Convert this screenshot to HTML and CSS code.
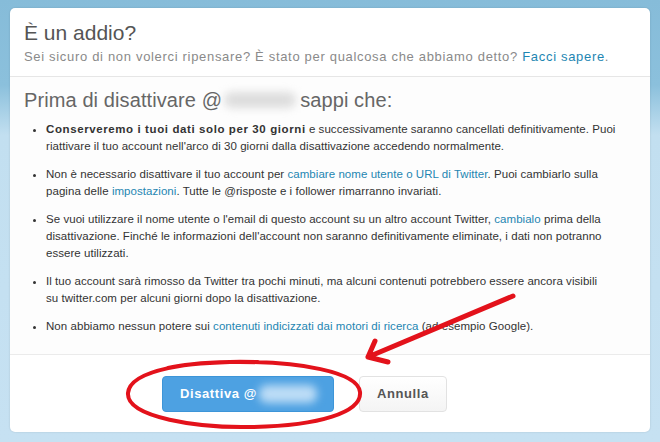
FILE: index.html
```html
<!DOCTYPE html>
<html lang="it">
<head>
  <meta charset="UTF-8">
  <title>Disattiva il tuo account</title>
  <link rel="stylesheet" href="styles.css">
</head>
<body>
  <div class="dialog">
    <div class="dialog-header">
      <h1>È un addio?</h1>
      <p>Sei sicuro di non volerci ripensare? È stato per qualcosa che abbiamo detto? <a href="#">Facci sapere</a>.</p>
    </div>

    <div class="dialog-body">
      <h2>Prima di disattivare @<span class="blur"></span> sappi che:</h2>
      <ul class="avvisi">
        <li><strong>Conserveremo i tuoi dati solo per 30 giorni</strong> e successivamente saranno cancellati definitivamente. Puoi<br>riattivare il tuo account nell'arco di 30 giorni dalla disattivazione accedendo normalmente.</li>
        <li>Non è necessario disattivare il tuo account per <a href="#">cambiare nome utente o URL di Twitter</a>. Puoi cambiarlo sulla<br>pagina delle <a href="#">impostazioni</a>. Tutte le @risposte e i follower rimarranno invariati.</li>
        <li>Se vuoi utilizzare il nome utente o l'email di questo account su un altro account Twitter, <a href="#">cambialo</a> prima della<br>disattivazione. Finché le informazioni dell'account non saranno definitivamente eliminate, i dati non potranno<br>essere utilizzati.</li>
        <li>Il tuo account sarà rimosso da Twitter tra pochi minuti, ma alcuni contenuti potrebbero essere ancora visibili<br>su twitter.com per alcuni giorni dopo la disattivazione.</li>
        <li>Non abbiamo nessun potere sui <a href="#">contenuti indicizzati dai motori di ricerca</a> (ad esempio Google).</li>
      </ul>
    </div>

    <div class="dialog-footer">
      <button class="btn btn-primary">Disattiva @<span class="blur blur-light"></span></button>
      <button class="btn">Annulla</button>
    </div>

    <!-- segni a mano sopra lo screenshot -->
    <svg class="segni" width="660" height="442" viewBox="0 0 660 442">
      <path d="M258 362 C 190 360, 130 370, 128 393 C 126 418, 200 428, 250 427 C 320 426, 362 412, 360 392 C 358 372, 300 361, 230 362 C 200 363, 180 365, 168 368"
            fill="none" stroke="#e3121b" stroke-width="4" stroke-linecap="round"/>
      <path d="M513 296 L 368 357 M 368 357 L 388 362 M 368 357 L 375 341"
            fill="none" stroke="#e3121b" stroke-width="5" stroke-linecap="round" stroke-linejoin="round"/>
    </svg>
  </div>
</body>
</html>
```

FILE: styles.css
```css
body {
  margin: 0;
  height: 442px;
  overflow: hidden;
  font-family: "Liberation Sans", Arial, sans-serif;
  background: linear-gradient(#86bcd9 0, #8bc0dc 85px, #c2dff0 135px, #c6e1f2 100%);
  padding: 8px 10px 0;
  box-sizing: border-box;
}
.dialog {
  position: relative;
  width: 640px;
  height: 424px;
  background: #fff;
  border-radius: 5px;
  box-shadow: 0 0 2px rgba(0, 0, 0, 0.15);
  display: flex;
  flex-direction: column;
}
a {
  color: #1e86b2;
  text-decoration: none;
}
.dialog-header {
  height: 69px;
  padding: 12px 14px 0;
  box-sizing: border-box;
  border-bottom: 1px solid #e6e6e6;
}
.dialog-header h1 {
  margin: 0;
  font-size: 21px;
  font-weight: normal;
  color: #555;
  line-height: 26px;
}
.dialog-header p {
  margin: 3px 0 0;
  font-size: 13px;
  letter-spacing: 0.68px;
  color: #8a8a8a;
}
.dialog-body {
  height: 278px;
  padding: 11px 4px 0 14px;
  box-sizing: border-box;
  background: #fdfdfd;
  border-bottom: 1px solid #ebebeb;
}
.dialog-body h2 {
  margin: 0;
  font-size: 20px;
  letter-spacing: 0.1px;
  font-weight: normal;
  color: #666;
  line-height: 24px;
  display: flex;
  align-items: center;
}
.blur {
  display: inline-block;
  width: 72px;
  height: 16px;
  margin: 0 4px 0 2px;
  background: #ddd;
  border-radius: 8px;
  filter: blur(4px);
}
.avvisi {
  margin: 9px 0 0;
  padding: 0 0 0 22px;
  font-size: 11.5px;
  letter-spacing: 0.05px;
  line-height: 17px;
  color: #333;
}
.avvisi li {
  margin-bottom: 11px;
}
.avvisi strong {
  letter-spacing: 0.6px;
}
.dialog-footer {
  flex: 1;
  display: flex;
  align-items: center;
  gap: 25px;
  padding: 0 0 0 152px;
}
.btn {
  height: 36px;
  padding: 0 17px;
  border: 1px solid #e2e2e2;
  border-radius: 4px;
  background: linear-gradient(#fff, #f4f4f4);
  font-family: inherit;
  font-size: 13px;
  font-weight: bold;
  letter-spacing: 0.6px;
  color: #555;
  display: flex;
  align-items: center;
  white-space: nowrap;
}
.btn-primary {
  width: 172px;
  padding: 0 0 0 17px;
  overflow: hidden;
  border-color: #3d95d8;
  background: #4da1e2;
  color: #fff;
}
.blur-light {
  width: 58px;
  height: 18px;
  margin: 0 0 0 2px;
  background: #bcdcf6;
}
.segni {
  position: absolute;
  left: -10px;
  top: -8px;
  pointer-events: none;
}
```
